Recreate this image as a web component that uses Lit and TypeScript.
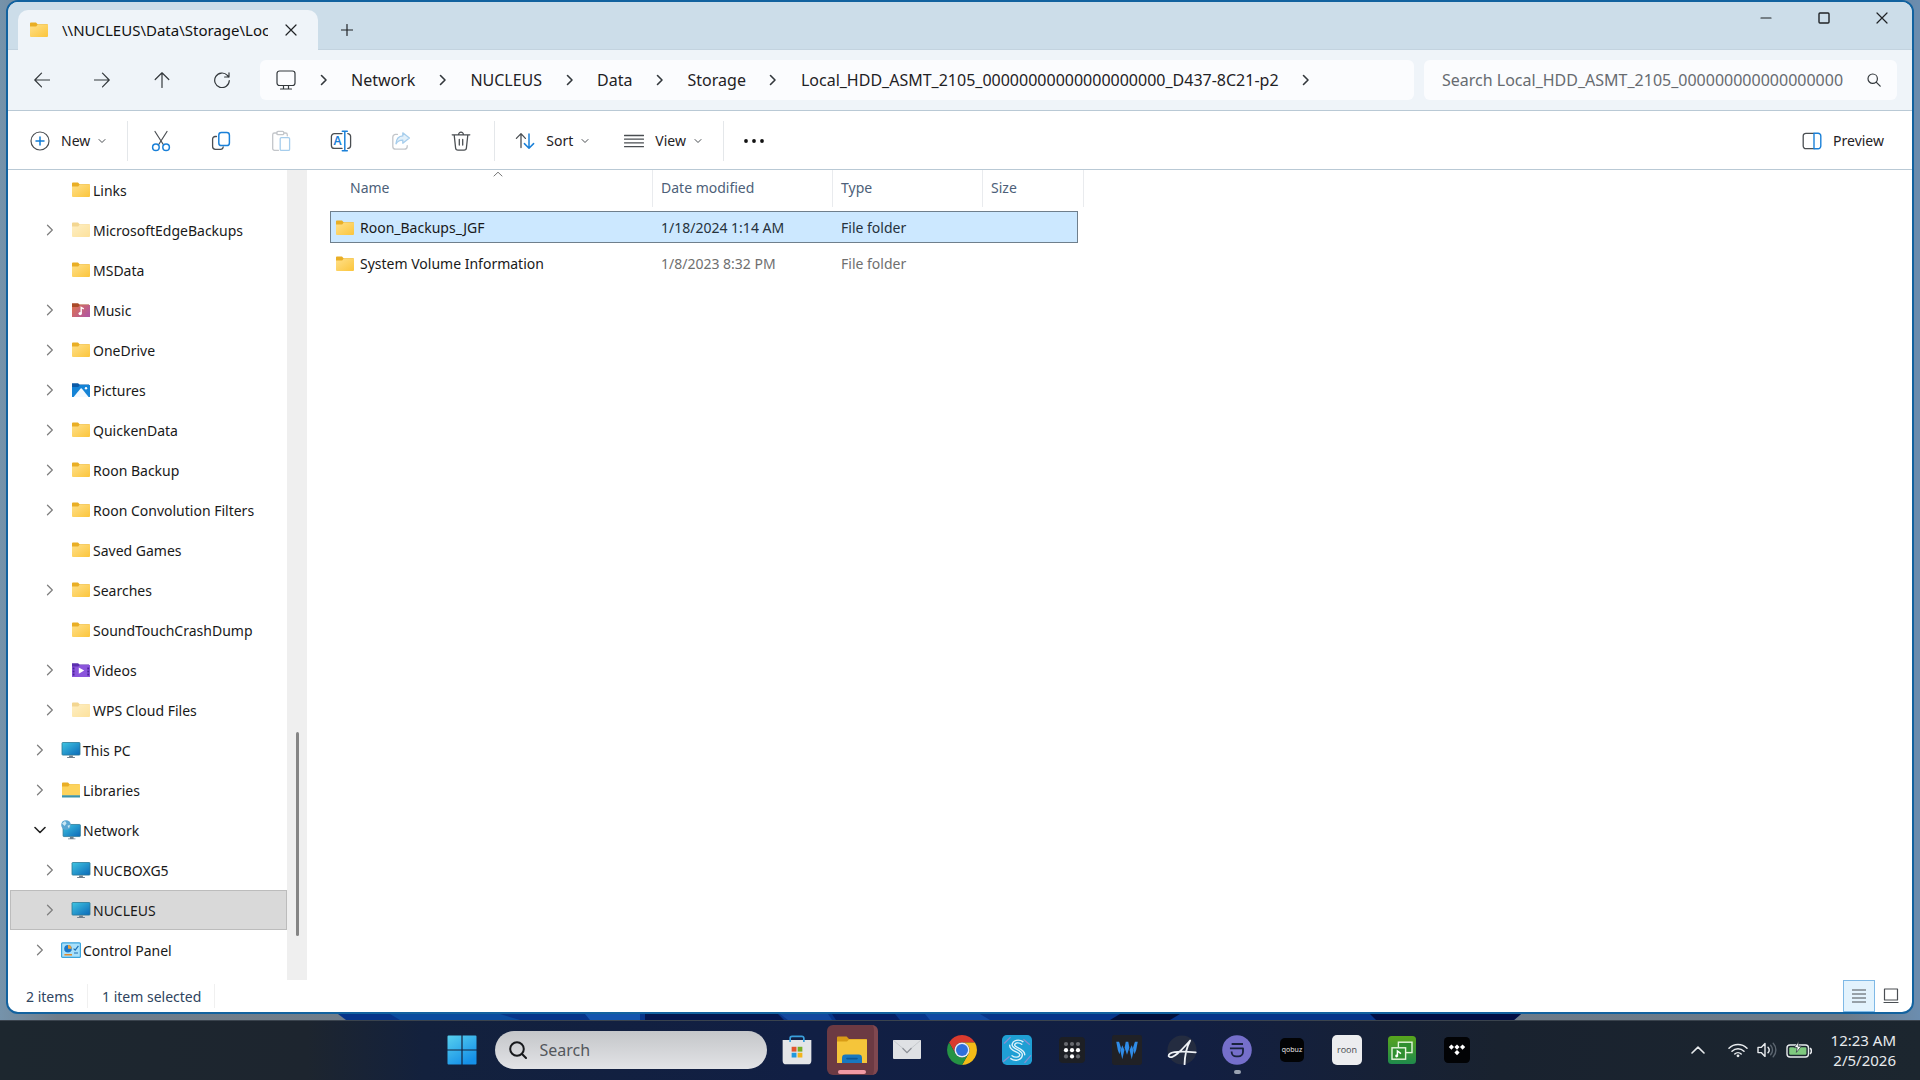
import { LitElement, html, svg, css, nothing, TemplateResult } from "lit";
import { customElement, property } from "lit/decorators.js";
import { classMap } from "lit/directives/class-map.js";

const FOLDER_NAME = "Local_HDD_ASMT_2105_00000000000000000000_D437-8C21-p2";

const base = css`
  *,
  *::before,
  *::after {
    box-sizing: border-box;
  }
  button,
  input {
    font: inherit;
    color: inherit;
    background: none;
    border: 0;
    margin: 0;
    padding: 0;
    outline: 0;
  }
  button {
    display: flex;
    align-items: center;
    justify-content: center;
  }
  a {
    color: inherit;
    text-decoration: none;
  }
  svg {
    display: block;
    flex: none;
  }
`;

/* ---------- glyphs ---------- */

const stroke = (w: number, h: number, body: TemplateResult, width = 1.3) => html`
  <svg width=${w} height=${h} viewBox="0 0 ${w} ${h}" fill="none" stroke="currentColor"
    stroke-width=${width} stroke-linecap="round" stroke-linejoin="round" aria-hidden="true">${body}</svg>`;

const chevronDown = stroke(10, 10, svg`<path d="M2 3.5 5 6.5 8 3.5"/>`, 1);
const chevronRight = stroke(8, 12, svg`<path d="M1.5 1.5 6 6 1.5 10.5"/>`, 1.6);

const glyphs: Record<string, TemplateResult> = {
  close: stroke(12, 12, svg`<path d="M1 1 11 11M11 1 1 11"/>`, 1.2),
  plus: stroke(12, 12, svg`<path d="M6 0.5V11.5M0.5 6H11.5"/>`, 1.2),
  minimize: stroke(12, 12, svg`<path d="M1 6H11"/>`, 1.2),
  maximize: stroke(12, 12, svg`<rect x="1" y="1" width="10" height="10" rx="1"/>`, 1.4),
  back: stroke(16, 16, svg`<path d="M15.5 8H1M7.5 1.2 0.8 8 7.5 14.8"/>`, 1.2),
  forward: stroke(16, 16, svg`<path d="M0.5 8H15M8.5 1.2 15.2 8 8.5 14.8"/>`, 1.2),
  up: stroke(16, 16, svg`<path d="M8 15.5V1M1.2 7.5 8 0.8 14.8 7.5"/>`, 1.2),
  refresh: stroke(16, 16, svg`<path d="M15.3 8.5A7.3 7.3 0 1 1 13.4 3.4L14.8 5M15 0.8V5H10.6"/>`, 1.2),
  monitor: stroke(20, 20, svg`<rect x="1" y="1" width="18" height="14.5" rx="2.5"/><path d="M4.5 19H15.5M7.5 15.5V19M12.5 15.5V19"/>`, 1.2),
  search: stroke(14, 14, svg`<circle cx="5.7" cy="5.7" r="4.7"/><path d="M9.2 9.2 13.2 13.2"/>`, 1.2),
  new: stroke(20, 20, svg`<circle cx="10" cy="10" r="9"/><path stroke="#0f7bd4" stroke-width="1.5" d="M10 6V14M6 10H14"/>`, 1.2),
  cut: stroke(20, 22, svg`<path d="M4 1.5 12.6 15M16 1.5 7.4 15"/><g stroke="#1a80d8" stroke-width="1.5"><circle cx="4.9" cy="17.3" r="3.3"/><circle cx="15.1" cy="17.3" r="3.3"/></g>`, 1.2),
  copy: stroke(20, 20, svg`<path d="M5.5 5.5H4.2A2.6 2.6 0 0 0 1.6 8.1V15.6A2.8 2.8 0 0 0 4.4 18.4H9.6A2.8 2.8 0 0 0 12.2 16"/><rect x="7.8" y="1.6" width="10.6" height="13" rx="2.6" stroke="#1a80d8" stroke-width="1.5"/>`),
  paste: stroke(20, 22, svg`<g stroke="#c3c6ca"><path d="M6 3H3.5A1.8 1.8 0 0 0 1.7 4.8V18.5A1.8 1.8 0 0 0 3.5 20.3H7.5M13 3H14.5A1.8 1.8 0 0 1 16.3 4.8V5.8"/><rect x="5.8" y="1.3" width="7" height="3.4" rx="1.2"/></g><rect x="9.2" y="7.6" width="9.4" height="12.8" rx="1.2" stroke="#a6cdec"/>`),
  rename: html`<svg width="22" height="22" viewBox="0 0 22 22" fill="none" stroke="currentColor" stroke-width="1.3" stroke-linecap="round" aria-hidden="true">
    <path d="M12 3.6H4.4A3 3 0 0 0 1.4 6.6V15.4A3 3 0 0 0 4.4 18.4H12M17.8 3.6H18A3 3 0 0 1 20.6 6.6V15.4A3 3 0 0 1 18 18.4H17.8"/>
    <path stroke="#1a80d8" stroke-width="1.5" d="M12.3 1.2H17.3M14.8 1.2V20.8M12.3 20.8H17.3"/>
    <text x="3.6" y="15.2" font-family="Noto Sans, sans-serif" font-size="12" font-weight="600" fill="#1a80d8" stroke="none">A</text></svg>`,
  share: stroke(20, 20, svg`<path stroke="#c3c6ca" d="M6.4 3.4H4.6A2.8 2.8 0 0 0 1.8 6.2V15.4A2.8 2.8 0 0 0 4.6 18.2H13.4A2.8 2.8 0 0 0 16.2 15.4V14.6"/><path stroke="#a6cdec" fill="#e2f0fa" d="M11.8 1.8 18.4 7 11.8 12.2V9.2C8.4 9.1 6.6 10.4 5 12.8 5.3 8.4 7.6 5.2 11.8 4.9Z"/>`),
  delete: stroke(20, 20, svg`<path d="M1.2 3.8H18.8M7.6 3.6A2.4 2.4 0 0 1 12.4 3.6M3.2 4 4.6 17A2.4 2.4 0 0 0 7 19.2H13A2.4 2.4 0 0 0 15.4 17L16.8 4M8.3 8.4V14M11.7 8.4V14"/>`),
  sort: stroke(20, 18, svg`<path d="M6 15.5V2M1.4 6.4 6 1.6 10.4 6.4"/><path stroke="#1a80d8" stroke-width="1.5" d="M14 2V16M9.4 11.6 14 16.2 18.6 11.6"/>`),
  view: stroke(20, 14, svg`<path d="M0.5 1.5H19.5M0.5 5.2H19.5M0.5 8.9H19.5M0.5 12.6H19.5"/>`),
  more: html`<svg width="20" height="4" viewBox="0 0 20 4" fill="#111" aria-hidden="true"><circle cx="2" cy="2" r="1.9"/><circle cx="10" cy="2" r="1.9"/><circle cx="18" cy="2" r="1.9"/></svg>`,
  preview: stroke(20, 18, svg`<path d="M12 1.3H4A2.7 2.7 0 0 0 1.2 4V14A2.7 2.7 0 0 0 4 16.7H12"/><path stroke="#1a80d8" stroke-width="1.4" d="M12 1.3H16A2.7 2.7 0 0 1 18.8 4V14A2.7 2.7 0 0 1 16 16.7H12Z"/>`),
  details: stroke(16, 14, svg`<path d="M1 1H15M1 5H15M1 9H15M1 13H15" stroke-linecap="butt"/>`, 1),
  large: stroke(16, 16, svg`<rect x="1.5" y="1" width="13" height="11"/><path d="M1 14.5H15"/>`, 1.2),
  trayUp: stroke(14, 8, svg`<path d="M1 7 7 1.2 13 7"/>`, 1.6),
  wifi: stroke(20, 16, svg`<path d="M1 6.2A13 13 0 0 1 19 6.2M4 9.2A8.8 8.8 0 0 1 16 9.2M6.8 12A4.6 4.6 0 0 1 13.2 12"/><circle cx="10" cy="13.8" r="1.4" fill="currentColor" stroke="none"/>`, 1.5),
  sound: stroke(20, 16, svg`<path d="M1 5.4H4.2L8 1.6V14.4L4.2 10.6H1ZM11 5.2A4.2 4.2 0 0 1 11 10.8"/><path stroke="#5c6670" d="M13.6 3.2A7 7 0 0 1 13.6 12.8M16.2 1.2A10 10 0 0 1 16.2 14.8"/>`, 1.4),
  battery: html`<svg width="26" height="18" viewBox="0 0 26 18" aria-hidden="true">
    <rect x="1" y="4" width="21.5" height="12" rx="3" fill="none" stroke="#e8ebee" stroke-width="1.4"/>
    <path d="M24 7.2A3.4 3.4 0 0 1 24 12.8" fill="none" stroke="#e8ebee" stroke-width="1.6"/>
    <rect x="3.2" y="6.2" width="17.2" height="7.6" rx="1.2" fill="#7fc97f"/>
    <path d="M12.8 0.6 8.2 6.6H11.2L10.4 11.4 15.4 5.2H12.2Z" fill="#fff" stroke="#1c262f" stroke-width="0.7"/></svg>`,
};

/* ---------- tree and file icons ---------- */

const folder = (w = 18, faded = false) => html`
  <svg width=${w} height="16" viewBox="0 0 18 16" preserveAspectRatio="none" opacity=${faded ? 0.5 : 1} aria-hidden="true">
    <defs><linearGradient id="f" x1="0" y1="0" x2="1" y2="1"><stop offset="0" stop-color="#ffe08a"/><stop offset="1" stop-color="#fbc53c"/></linearGradient></defs>
    <path d="M0 1.4A.9.9 0 0 1 .9.5H6L7.6 2.2H17A1 1 0 0 1 18 3.2V6H0Z" fill="#e9ae25"/>
    <path d="M0 4.4H6.2L7.8 2.4H18V14A1 1 0 0 1 17 15H1A1 1 0 0 1 0 14Z" fill="url(#f)"/></svg>`;

const screen = svg`
  <defs><linearGradient id="m" x1="0" y1="0" x2="1" y2="1"><stop offset="0" stop-color="#3fc6e2"/><stop offset="1" stop-color="#0c68b8"/></linearGradient></defs>
  <rect x="0.5" y="0.5" width="18" height="12.6" rx="0.8" fill="url(#m)" stroke="#2a7896" stroke-width="0.8"/>
  <path d="M7.6 13.4H11.4V15H13.4V16H5.6V15H7.6Z" fill="#6f7f8b"/>`;

const treeIcons: Record<string, TemplateResult> = {
  folder: folder(),
  faded: folder(18, true),
  music: html`<svg width="18" height="16" viewBox="0 0 18 16" aria-hidden="true">
    <defs><linearGradient id="mu" x1="0" y1="0" x2="1" y2="0.6"><stop offset="0" stop-color="#e0744e"/><stop offset="1" stop-color="#b3589c"/></linearGradient></defs>
    <path d="M0 1.2H6L7.6 2.6H17V6H0Z" fill="#a94a28"/><path d="M0 5H6.2L8 3H18V15H0Z" fill="url(#mu)"/>
    <path d="M9.2 11.4V5.4L11.8 6.8" fill="none" stroke="#fff" stroke-width="1.4"/><circle cx="8.2" cy="11.6" r="1.7" fill="#fff"/></svg>`,
  pictures: html`<svg width="18" height="16" viewBox="0 0 18 16" aria-hidden="true">
    <path d="M0 1.2H6L7.6 2.6H17V6H0Z" fill="#0b5aa6"/><path d="M0 5H6.2L8 3H18V15H0Z" fill="#1483d6"/>
    <path d="M1.6 15 8.6 6.6Q9.2 6 9.8 6.6L16.6 15Z" fill="#f2f9ff"/><circle cx="14" cy="6.2" r="1.2" fill="#fff"/></svg>`,
  videos: html`<svg width="18" height="16" viewBox="0 0 18 16" aria-hidden="true">
    <path d="M0 1.2H6L7.6 2.6H17V6H0Z" fill="#5b2fae"/><path d="M0 4.6H6.2L8 3H18V15H0Z" fill="#8b55dc"/>
    <path d="M1.6 5.6V14M16.2 5.6V14" stroke="#4a2397" stroke-width="1.8" stroke-dasharray="1.8 1.2"/>
    <path d="M6.8 5.4 12.2 8.6 6.8 11.8Z" fill="#fff"/></svg>`,
  pc: html`<svg width="20" height="17" viewBox="-0.5 0 20 17" aria-hidden="true">${screen}</svg>`,
  libraries: html`<svg width="18" height="18" viewBox="0 0 18 18" aria-hidden="true">
    <path d="M0 2.4A.9.9 0 0 1 .9 1.5H6L7.6 3.2H17A1 1 0 0 1 18 4.2V7H0Z" fill="#e9ae25"/>
    <path d="M0 5.4H6.2L7.8 3.4H18V14.5H0Z" fill="#fdd35c"/><path d="M0 14.2H18V16.6H0Z" fill="#3d93a8"/></svg>`,
  network: html`<svg width="20" height="20" viewBox="0 0 20 20" aria-hidden="true">
    <g transform="translate(1.6 4) scale(0.96)">${screen}</g>
    <circle cx="5" cy="5" r="4.8" fill="#5aa6d2"/><path d="M1 3.6 4 1 5.6 3.2 3.6 6ZM6.4 5.8 9 5 8 8.4Z" fill="#c9e6f3"/></svg>`,
  control: html`<svg width="20" height="17" viewBox="0 0 20 17" aria-hidden="true">
    <rect x="0.6" y="0.8" width="18.8" height="14.6" rx="1" fill="#a8e0fb" stroke="#3ba4dc" stroke-width="1.2"/>
    <circle cx="7" cy="6.8" r="3.8" fill="#1c78c8"/><path d="M7 6.8V3A3.8 3.8 0 0 1 10.6 6.8Z" fill="#f0a038"/>
    <path d="M12.6 6.6 14.2 8.2 17.4 3.8M13 11H17" fill="none" stroke="#1c6fb4" stroke-width="1.2"/>
    <path d="M3.4 12.8H11" stroke="#e08a2c" stroke-width="1.4"/></svg>`,
};

/* ---------- taskbar icons ---------- */

const box = (size: number, body: TemplateResult) => html`
  <svg width=${size} height=${size} viewBox="0 0 28 28" aria-hidden="true">${body}</svg>`;

const chromePetal = "M14 7H26.1A14 14 0 0 0 1.9 7L7.94 17.5A7 7 0 0 1 14 7Z";

const apps: { name: string; active?: boolean; running?: boolean; icon: TemplateResult }[] = [
  { name: "Microsoft Store", icon: box(30, svg`
    <path d="M0.6 4.6H27.4V24A3.4 3.4 0 0 1 24 27.4H4A3.4 3.4 0 0 1 .6 24Z" fill="#e4e5e7"/>
    <path d="M7.6 6.6V3A1.8 1.8 0 0 1 9.4 1.2H18.6A1.8 1.8 0 0 1 20.4 3V6.6" fill="none" stroke="#3aa0dc" stroke-width="1.6"/>
    <path d="M9 11H13.5V15.5H9Z" fill="#e2542c"/><path d="M14.6 11H19V15.5H14.6Z" fill="#78ad24"/>
    <path d="M9 16.6H13.5V21H9Z" fill="#2098dd"/><path d="M14.6 16.6H19V21H14.6Z" fill="#f3b41b"/>`) },
  { name: "File Explorer", active: true, icon: html`<svg width="30" height="28" viewBox="0 0 30 28" aria-hidden="true">
    <path d="M0 1.6A1 1 0 0 1 1 .6H9.6L12 3H29A1 1 0 0 1 30 4V8H0Z" fill="#d99c16"/>
    <path d="M0 5.4H10L12 3.6H30V27H0Z" fill="#f5c53a"/>
    <path d="M5 27V22A3.4 3.4 0 0 1 8.4 18.6H21.6A3.4 3.4 0 0 1 25 22V27Z" fill="#1878c0"/>
    <path d="M10 22.6H20" stroke="#0d5796" stroke-width="1.6" stroke-linecap="round"/></svg>` },
  { name: "Mail", icon: html`<svg width="28" height="19" viewBox="0 0 28 19" aria-hidden="true">
    <rect width="28" height="19" rx="1" fill="#dfe1e4"/><path d="M9.4 8 14 12.6 18.6 8" fill="none" stroke="#8b8f95" stroke-width="1.2"/>
    <path d="M0 0 9.4 8M28 0 18.6 8" stroke="#c6c9cd"/></svg>` },
  { name: "Google Chrome", icon: box(30, svg`
    <path d=${chromePetal} fill="#d93a2e"/>
    <path d=${chromePetal} fill="#f3bb17" transform="rotate(120 14 14)"/>
    <path d=${chromePetal} fill="#259344" transform="rotate(240 14 14)"/>
    <circle cx="14" cy="14" r="7" fill="#e9edf3"/><circle cx="14" cy="14" r="5.6" fill="#2f6fdc"/>`) },
  { name: "SoundID", icon: box(30, svg`
    <rect width="28" height="28" rx="4.5" fill="#1f9fd4"/>
    <path d="M2 8 8 2M1 25 7 20M20 4 26 9M21 26 27 19" stroke="#8a8fd0" stroke-width="1.2"/>
    <g fill="none" stroke="#dff4fb" stroke-width="1.3" stroke-linecap="round">
      <path d="M19.5 6.2C16 3.6 10 4.6 9.4 9 9 13.4 19.4 13.6 19 18.6 18.6 23.4 12.4 25 8.2 22"/>
      <path d="M18.4 8.6C15.8 6.6 12 7 11.8 9.4 11.8 12 21.4 12.6 21.2 18.4"/>
      <path d="M9.4 19.4C12 21.4 16.4 21 16.6 18.4 16.6 15.8 7 15.2 7.2 9.6"/></g>`) },
  { name: "Sonos", icon: box(28, svg`
    <rect x="1" y="1" width="26" height="26" rx="4" fill="#1d1f24"/>
    <g fill="#696b70"><circle cx="8" cy="8" r="2.1"/><circle cx="14" cy="8" r="2.1"/><circle cx="20" cy="8" r="2.1"/><circle cx="8" cy="20.4" r="2.1"/><circle cx="20" cy="20.4" r="2.1"/></g>
    <g fill="#fff"><circle cx="8" cy="14.2" r="2.1"/><circle cx="14" cy="14.2" r="2.1"/><circle cx="20" cy="14.2" r="2.1"/><circle cx="14" cy="20.4" r="2.1"/></g>`) },
  { name: "Wavelet", icon: box(30, svg`
    <rect width="28" height="28" rx="2" fill="#202126"/>
    <g fill="#2f8ce8"><path d="M4 6.4H6.6L8.4 12 7 18 5.4 14Z"/><path d="M9.6 9.6 11.6 14 9.6 22.6 7.8 14.6Z"/><path d="M12.8 6.4H15.2L16.2 12 14 18.4 11.8 12Z"/><path d="M18.4 9.6 20.2 14.6 18.4 22.6 16.4 14Z"/><path d="M21.4 6.4H24L22.6 14 21 18 19.6 12Z"/></g>`) },
  { name: "Audirvana", icon: box(30, svg`
    <circle cx="14" cy="14" r="13.6" fill="#242c40"/>
    <path d="M1.6 19.8C1 16.4 8 14.4 26.8 16.2M1.6 19.8C5 24 15.4 12 21.6 5.2 18 12 16.6 19 16.4 27.4" fill="none" stroke="#eef1f5" stroke-width="1.7" stroke-linecap="round" stroke-linejoin="round"/>`) },
  { name: "Dirac", running: true, icon: box(30, svg`
    <circle cx="14" cy="14" r="13.8" fill="#756fcb"/>
    <path d="M9 8.4H19.6M7.4 12.4H19.6V15.6A4.4 4.4 0 0 1 15.2 20H13.2A4.2 4.2 0 0 1 9 15.8V15.4" fill="none" stroke="#19233f" stroke-width="1.7" stroke-linejoin="round"/>`) },
  { name: "Qobuz", icon: html`<span class="word dark">qobuz</span>` },
  { name: "Roon", icon: html`<span class="word light">roon</span>` },
  { name: "Media Player", icon: box(28, svg`
    <defs><linearGradient id="gr" x1="0" y1="0" x2="0" y2="1"><stop offset="0" stop-color="#58a51c"/><stop offset="1" stop-color="#1f8a4c"/></linearGradient></defs>
    <rect width="28" height="28" rx="3.5" fill="url(#gr)"/>
    <g fill="#2f8f30" stroke="#e6f5dd" stroke-width="1.4"><rect x="10.4" y="6.2" width="13.6" height="10.4"/><rect x="4" y="11.8" width="13.6" height="11.4"/></g>
    <path d="M9.4 20.4V15L13 17.6" fill="none" stroke="#fff" stroke-width="1.5"/><circle cx="8.6" cy="20" r="1.4" fill="#fff"/>`) },
  { name: "Tidal", icon: box(26, svg`
    <rect width="28" height="28" rx="4.5" fill="#020305"/>
    <g fill="#fff"><path d="M8 8 10.8 10.8 8 13.6 5.2 10.8Z"/><path d="M14 8 16.8 10.8 14 13.6 11.2 10.8Z"/><path d="M20 8 22.8 10.8 20 13.6 17.2 10.8Z"/><path d="M14 14 16.8 16.8 14 19.6 11.2 16.8Z"/></g>`) },
];

/* ---------- data ---------- */

interface TreeItem {
  label: string;
  level: 1 | 2;
  icon: string;
  expand?: "closed" | "open";
  selected?: boolean;
}

const leaf = (label: string): TreeItem => ({ label, level: 2, icon: "folder" });
const branch = (label: string, icon = "folder", level: 1 | 2 = 2): TreeItem => ({ label, level, icon, expand: "closed" });

const tree: TreeItem[] = [
  leaf("Links"),
  branch("MicrosoftEdgeBackups", "faded"),
  leaf("MSData"),
  branch("Music", "music"),
  branch("OneDrive"),
  branch("Pictures", "pictures"),
  branch("QuickenData"),
  branch("Roon Backup"),
  branch("Roon Convolution Filters"),
  leaf("Saved Games"),
  branch("Searches"),
  leaf("SoundTouchCrashDump"),
  branch("Videos", "videos"),
  branch("WPS Cloud Files", "faded"),
  branch("This PC", "pc", 1),
  branch("Libraries", "libraries", 1),
  { label: "Network", level: 1, icon: "network", expand: "open" },
  branch("NUCBOXG5", "pc"),
  { ...branch("NUCLEUS", "pc"), selected: true },
  branch("Control Panel", "control", 1),
];

const files = [
  { name: "Roon_Backups_JGF", modified: "1/18/2024 1:14 AM", type: "File folder", selected: true },
  { name: "System Volume Information", modified: "1/8/2023 8:32 PM", type: "File folder", selected: false },
];

/* ---------- elements ---------- */

@customElement("title-bar")
class TitleBar extends LitElement {
  static styles = [base, css`
    :host {
      display: flex;
      height: 48px;
      padding: 0 1px 0 10px;
      background: #ccdde9;
      border-bottom: 1px solid #c3d3df;
    }
    .tab {
      display: flex;
      align-items: center;
      width: 300px;
      height: 40px;
      margin-top: 8px;
      padding: 0 12px 1px;
      background: #eff4f9;
      border-radius: 10px 10px 0 0;
    }
    .title {
      width: 206px;
      margin: 0 15px 0 14px;
      overflow: hidden;
      white-space: nowrap;
      font-size: 15px;
      line-height: 22px;
      color: #111;
    }
    .close {
      width: 16px;
      height: 20px;
    }
    .add {
      width: 40px;
      height: 40px;
      margin: 8px 0 0 9px;
    }
    .controls {
      display: flex;
      margin-left: auto;
    }
    .controls button {
      width: 58px;
      height: 32px;
    }
  `];
  render() {
    return html`
      <div class="tab">${folder()}<span class="title">${"\\\\NUCLEUS\\Data\\Storage\\" + FOLDER_NAME}</span>
        <button class="close" aria-label="Close tab">${glyphs.close}</button></div>
      <button class="add" aria-label="New tab">${glyphs.plus}</button>
      <div class="controls">
        <button aria-label="Minimize">${glyphs.minimize}</button>
        <button aria-label="Maximize">${glyphs.maximize}</button>
        <button aria-label="Close window">${glyphs.close}</button>
      </div>`;
  }
}

@customElement("address-row")
class AddressRow extends LitElement {
  static styles = [base, css`
    :host {
      display: flex;
      align-items: center;
      height: 61px;
      padding: 0 15px 0 4px;
      background: #eff4f9;
      border-bottom: 1px solid #b9c9d5;
      font-size: 16px;
      color: #1f2225;
    }
    .nav {
      width: 60px;
      height: 40px;
      color: #33383c;
    }
    .crumbs,
    .search {
      display: flex;
      align-items: center;
      height: 40px;
      background: #fbfcfe;
      border-radius: 6px;
    }
    .crumbs {
      flex: 1 1 0;
      min-width: 0;
      margin: 0 10px 0 8px;
      padding-left: 16px;
      overflow: hidden;
      white-space: nowrap;
      color: #33383c;
    }
    .crumbs a {
      line-height: 24px;
      color: #1f2225;
    }
    .sep {
      width: 55px;
      height: 40px;
      flex: none;
    }
    .search {
      flex: 0 1 473px;
      padding: 0 16px 0 18px;
      gap: 24px;
      color: #33383c;
    }
    .search input {
      flex: 1;
      min-width: 0;
      height: 24px;
    }
    .search input::placeholder {
      color: #676b70;
      opacity: 1;
    }
  `];
  render() {
    return html`
      ${(["back", "forward", "up", "refresh"] as const).map((g) => html`<button class="nav" aria-label=${g}>${glyphs[g]}</button>`)}
      <nav class="crumbs" aria-label="Address">
        ${glyphs.monitor}<button class="sep" aria-label="Expand root">${chevronRight}</button>
        ${["Network", "NUCLEUS", "Data", "Storage", FOLDER_NAME].map((c) => html`<a href="#">${c}</a><button class="sep" aria-label="Expand ${c}">${chevronRight}</button>`)}
      </nav>
      <label class="search"><input type="text" aria-label="Search folder" placeholder="Search ${FOLDER_NAME}" />${glyphs.search}</label>`;
  }
}

@customElement("command-bar")
class CommandBar extends LitElement {
  static styles = [base, css`
    :host {
      display: flex;
      align-items: center;
      height: 59px;
      padding: 2px 11px 0 5px;
      border-bottom: 1px solid #b9c9d5;
      color: #1f2225;
    }
    svg {
      color: #4a4e52;
    }
    .menu {
      height: 40px;
      padding: 0 17px;
      gap: 11px;
    }
    .label {
      display: flex;
      align-items: center;
      gap: 7px;
      line-height: 20px;
    }
    .tool {
      width: 60px;
      height: 40px;
    }
    .rule {
      width: 1px;
      height: 40px;
      margin: 0 3px;
      background: #e4e7ea;
    }
    .end {
      margin-left: auto;
    }
  `];
  private menu(icon: string, label: string) {
    return html`<button class="menu">${glyphs[icon]}<span class="label">${label}${chevronDown}</span></button>`;
  }
  render() {
    return html`
      ${this.menu("new", "New")}
      <span class="rule"></span>
      ${["cut", "copy", "paste", "rename", "share", "delete"].map((g) => html`<button class="tool" aria-label=${g}>${glyphs[g]}</button>`)}
      <span class="rule"></span>
      ${this.menu("sort", "Sort")} ${this.menu("view", "View")}
      <span class="rule"></span>
      <button class="menu" aria-label="See more">${glyphs.more}</button>
      <button class="menu end">${glyphs.preview}<span class="label">Preview</span></button>`;
  }
}

@customElement("folder-tree")
class FolderTree extends LitElement {
  @property({ attribute: false }) items: TreeItem[] = [];
  static styles = [base, css`
    :host {
      display: flex;
      width: 300px;
      flex: none;
    }
    ul {
      flex: 1;
      margin: 0;
      padding: 0 0 0 2px;
      list-style: none;
    }
    .row {
      display: flex;
      align-items: center;
      height: 40px;
      padding: 2px 0 0 20px;
      border: 1px solid transparent;
      color: #191919;
    }
    .row.deep {
      padding-left: 30px;
    }
    .row.selected {
      background: #d9d9d9;
      border-color: #bcbcbc;
    }
    .toggle {
      width: 18px;
      height: 24px;
      margin: 0 11px 2px 0;
      flex: none;
      color: #808080;
    }
    .toggle.open {
      color: #222;
    }
    a {
      display: flex;
      align-items: center;
      line-height: 20px;
      white-space: nowrap;
    }
    .icon {
      display: flex;
      justify-content: center;
      width: 20px;
      margin: 0 2px 2px 1px;
    }
    .track {
      display: grid;
      grid-template-rows: 563fr 204fr 44fr;
      justify-content: center;
      width: 20px;
      background: #efefef;
      margin-right: 1px;
    }
    .thumb {
      grid-row: 2;
      width: 3px;
      border-radius: 2px;
      background: #858585;
    }
  `];
  render() {
    return html`
      <ul>
        ${this.items.map((i) => html`<li class=${classMap({ row: true, deep: i.level === 2, selected: !!i.selected })}>
          ${i.expand
            ? html`<button class=${classMap({ toggle: true, open: i.expand === "open" })} aria-label="Toggle ${i.label}">
                ${i.expand === "open" ? stroke(12, 8, svg`<path d="M1 1.5 6 6.5 11 1.5"/>`, 1.6) : stroke(8, 12, svg`<path d="M1.5 1.2 6.3 6 1.5 10.8"/>`, 1.3)}
              </button>`
            : html`<span class="toggle"></span>`}
          <a href="#"><span class="icon">${treeIcons[i.icon]}</span>${i.label}</a>
        </li>`)}
      </ul>
      <div class="track"><span class="thumb"></span></div>`;
  }
}

@customElement("file-list")
class FileList extends LitElement {
  static styles = [base, css`
    :host {
      display: block;
      flex: 1;
      min-width: 0;
      padding-left: 22px;
    }
    table,
    thead,
    tbody {
      display: block;
      width: 754px;
    }
    tr {
      display: grid;
      grid-template-columns: 323px 180px 150px 1fr;
    }
    th {
      position: relative;
      height: 37px;
      padding: 0 8px;
      border-right: 1px solid #e9ebee;
      font-weight: 400;
      text-align: left;
      line-height: 36px;
      color: #4d5f79;
    }
    th:first-child {
      padding-left: 20px;
    }
    .caret {
      position: absolute;
      left: 50%;
      top: 1px;
      padding-left: 2px;
      color: #777;
    }
    tbody tr {
      height: 32px;
      margin: 4px 6px 0 0;
      align-items: center;
    }
    tbody tr.selected {
      background: #cce8ff;
      outline: 1px solid #6f7f8c;
      outline-offset: -1px;
    }
    td {
      padding: 1px 8px 0;
      line-height: 20px;
      color: #6f6f6f;
    }
    .selected td {
      color: #26323c;
    }
    .name {
      display: flex;
      align-items: center;
      gap: 6px;
      padding-left: 6px;
    }
    .name a {
      color: #191919;
    }
  `];
  render() {
    return html`
      <table>
        <thead><tr>
          <th>Name<span class="caret">${stroke(10, 6, svg`<path d="M1 5 5 1.2 9 5"/>`, 1)}</span></th>
          <th>Date modified</th><th>Type</th><th>Size</th>
        </tr></thead>
        <tbody>
          ${files.map((f) => html`<tr class=${f.selected ? "selected" : nothing}>
            <td class="name">${folder()}<a href="#">${f.name}</a></td><td>${f.modified}</td><td>${f.type}</td><td></td>
          </tr>`)}
        </tbody>
      </table>`;
  }
}

@customElement("status-bar")
class StatusBar extends LitElement {
  static styles = [base, css`
    :host {
      display: flex;
      align-items: center;
      height: 32px;
      padding: 0 5px 0 18px;
      color: #2f4460;
      line-height: 20px;
    }
    .count {
      height: 24px;
      padding-right: 13px;
      margin-right: 14px;
      border-right: 1px solid #f0f0f0;
      line-height: 26px;
    }
    .views {
      display: flex;
      margin-left: auto;
      color: #4a4e52;
    }
    .views button {
      width: 32px;
      height: 32px;
    }
    .views .on {
      background: #e3f3fd;
      border: 1px solid #7fb9e6;
    }
  `];
  render() {
    return html`
      <span class="count">2 items</span><span class="count">1 item selected</span>
      <div class="views">
        <button class="on" aria-label="Details view">${glyphs.details}</button>
        <button aria-label="Large icons view">${glyphs.large}</button>
      </div>`;
  }
}

@customElement("task-bar")
class TaskBar extends LitElement {
  static styles = [base, css`
    :host {
      display: grid;
      grid-template-columns: 1fr auto 1fr;
      align-items: center;
      height: 60px;
      padding-bottom: 2px;
      border-top: 1px solid #3a434d;
      background: linear-gradient(90deg, #1d272f 0%, #1d252f 16%, #13213d 22%, #111f44 42%, #121f42 62%, #19222f 78%, #1c262f 100%);
    }
    .dock {
      grid-column: 2;
      display: flex;
      align-items: center;
    }
    .start {
      width: 52px;
      height: 50px;
      margin-right: 7px;
    }
    .search {
      display: flex;
      align-items: center;
      gap: 13px;
      width: 272px;
      height: 38px;
      margin-right: 3px;
      padding: 0 14px;
      border-radius: 19px;
      background: linear-gradient(180deg, #c4c6c9, #e2e3e6);
      color: #17191c;
      font-size: 16px;
    }
    .search input {
      flex: 1;
      min-width: 0;
      height: 24px;
    }
    .search input::placeholder {
      color: #53575c;
      opacity: 1;
    }
    .app {
      position: relative;
      width: 55px;
      height: 50px;
    }
    .active::before {
      content: "";
      position: absolute;
      inset: 0 2px;
      border-radius: 6px;
      background: #6c3a43;
      border-right: 4px solid #804850;
    }
    .app svg {
      position: relative;
    }
    .active::after,
    .running::after {
      content: "";
      position: absolute;
      bottom: 1px;
      width: 28px;
      height: 4px;
      border-radius: 2px;
      background: #f29aa4;
    }
    .running::after {
      width: 7px;
      background: #9aa3b2;
    }
    .word {
      display: flex;
      align-items: center;
      justify-content: center;
      border-radius: 5px;
      font-family: "Open Sans", sans-serif;
      line-height: 12px;
    }
    .word.dark {
      width: 24px;
      height: 24px;
      background: #020305;
      color: #f2f2f2;
      font-size: 7px;
    }
    .word.light {
      width: 30px;
      height: 30px;
      background: #ecedef;
      color: #44484d;
      font-size: 9px;
    }
    .tray {
      display: flex;
      align-items: center;
      justify-self: end;
      gap: 9px;
      padding-right: 24px;
      color: #e8ebee;
    }
    .up {
      width: 14px;
      margin-right: 14px;
    }
    .clock {
      display: flex;
      flex-direction: column;
      align-items: flex-end;
      margin-left: 10px;
      font-size: 15px;
      line-height: 20px;
    }
  `];
  render() {
    return html`
      <div class="dock">
        <button class="start" aria-label="Start">
          <svg width="30" height="30" viewBox="0 0 30 30" aria-hidden="true">
            <defs><linearGradient id="w" x1="0" y1="0" x2="0.6" y2="1"><stop offset="0" stop-color="#58d0ee"/><stop offset="1" stop-color="#1590e8"/></linearGradient></defs>
            <path fill="url(#w)" d="M1.5 0.5H14.4V14.4H.5V1.5A1 1 0 0 1 1.5.5ZM15.6.5H28.5A1 1 0 0 1 29.5 1.5V14.4H15.6ZM.5 15.6H14.4V29.5H1.5A1 1 0 0 1 .5 28.5ZM15.6 15.6H29.5V28.5A1 1 0 0 1 28.5 29.5H15.6Z"/></svg>
        </button>
        <label class="search">
          ${stroke(18, 18, svg`<circle cx="8" cy="8" r="6.8"/><path d="M13 13 17 17"/>`, 2)}
          <input type="text" placeholder="Search" aria-label="Search Windows" />
        </label>
        ${apps.map((a) => html`<button class=${classMap({ app: true, active: !!a.active, running: !!a.running })} aria-label=${a.name}>${a.icon}</button>`)}
      </div>
      <div class="tray">
        <button class="up" aria-label="Show hidden icons">${glyphs.trayUp}</button>
        ${glyphs.wifi}${glyphs.sound}${glyphs.battery}
        <div class="clock"><span>12:23 AM</span><span>2/5/2026</span></div>
      </div>`;
  }
}

@customElement("app-root")
class AppRoot extends LitElement {
  static styles = [base, css`
    :host {
      display: flex;
      flex-direction: column;
      min-height: 100vh;
      font-family: "Noto Sans", "Open Sans", sans-serif;
      font-size: 14px;
      color: #1f2225;
    }
    .desktop {
      display: flex;
      flex-direction: column;
      flex: 1;
      background: linear-gradient(90deg, #7593ab 0%, #707d8a 3%, #6c7a88 96%, #6b8daf 100%);
    }
    .window {
      display: flex;
      flex-direction: column;
      flex: 1;
      margin: 0 6px;
      overflow: hidden;
      border: 2px solid #12629f;
      border-radius: 12px;
      background: #fff;
    }
    .body {
      display: flex;
      flex: 1;
    }
    .wallpaper {
      width: 100%;
      height: 6px;
    }
  `];
  render() {
    return html`
      <main class="desktop">
        <section class="window" aria-label="File Explorer">
          <title-bar></title-bar>
          <address-row></address-row>
          <command-bar></command-bar>
          <div class="body">
            <folder-tree .items=${tree}></folder-tree>
            <file-list></file-list>
          </div>
          <status-bar></status-bar>
        </section>
        <svg class="wallpaper" viewBox="0 0 1920 6" preserveAspectRatio="none" aria-hidden="true">
          <path d="M338 0H1521L1514 6H346Z" fill="#07358a"/>
          <path d="M390 0H500L520 6H400Z" fill="#0a4c9f"/>
          <path d="M585 0H640V6H590Z" fill="#1354ae"/>
          <path d="M645 0H778L784 6H645Z" fill="#04164f"/>
          <path d="M780 0H828L832 6H788Z" fill="#12489f"/>
          <path d="M832 0H895L900 6H836Z" fill="#051f66"/>
          <path d="M925 0H980L990 6H930Z" fill="#1049a3"/>
          <path d="M1120 0H1180L1170 6H1110Z" fill="#03103c"/>
          <path d="M1370 0H1521L1514 6H1376Z" fill="#020f45"/>
        </svg>
      </main>
      <task-bar></task-bar>`;
  }
}
